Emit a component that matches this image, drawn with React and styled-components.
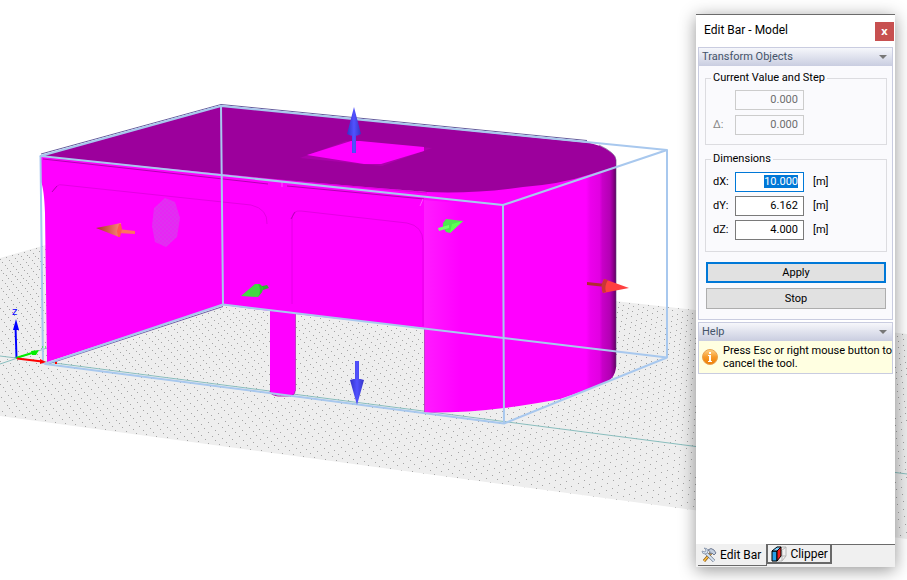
import React, { useEffect, useRef, useState } from 'react';
import styled, { createGlobalStyle, css } from 'styled-components';

const GlobalStyle = createGlobalStyle`
  * {
    box-sizing: border-box;
  }

  body {
    margin: 0;
    background: #fff;
    font-family: Roboto, 'Noto Sans', sans-serif;
    font-size: 11px;
    line-height: 14px;
    color: #000;
  }
`;

// Styled Components
const Workspace = styled.main`
  position: relative;
  display: flex;
  justify-content: flex-end;
  min-height: 100vh;
  overflow: hidden;
`;

/* The 3D view fills the window behind the tool panel */
const Viewport = styled.svg`
  position: absolute;
  inset: 0;
  width: 100%;
  height: 100%;
`;

const Panel = styled.aside`
  position: relative;
  display: flex;
  flex-direction: column;
  width: 199px;
  margin: 14px 12px 13px;
  background: #fff;
  border-top: 1px solid #6b6b6b;
  box-shadow: 0 3px 16px rgba(0, 0, 0, 0.42);
`;

const TitleBar = styled.header`
  display: flex;
  justify-content: space-between;
  height: 32px;
  padding: 7px 1px 0 8px;
`;

const Title = styled.h1`
  margin: 0;
  font-size: 12px;
  font-weight: normal;
  line-height: 16px;
`;

const CloseButton = styled.button`
  width: 19px;
  height: 19px;
  padding: 0 0 2px;
  border: none;
  background: #c75050;
  color: #fff;
  font: bold 11px/16px 'Noto Sans', sans-serif;
`;

const Sections = styled.div`
  flex: 1;
  display: flex;
  flex-direction: column;
  gap: 2px;
  padding: 0 2px;
`;

const Section = styled.section`
  border: 1px solid #c9cce0;
  background: #fafafd;
`;

const SectionHeader = styled.button`
  display: flex;
  align-items: center;
  justify-content: space-between;
  width: 100%;
  height: 18px;
  padding: 0 5px 0 3px;
  border: none;
  background: linear-gradient(#f6f7fb, #c9cde0);
  color: #44546a;
  font: inherit;

  &::after {
    content: '';
    border: 4px solid transparent;
    border-top-color: #777;
    border-bottom: none;
  }
`;

const TransformForm = styled.form`
  display: flex;
  flex-direction: column;
  padding: 5px 5px 10px 6px;
`;

const Group = styled.fieldset`
  display: flex;
  flex-direction: column;
  gap: ${(props) => props.$gap}px;
  min-width: 0;
  margin: 0 0 ${(props) => props.$after}px;
  padding: ${(props) => props.$top}px 7px ${(props) => props.$bottom}px;
  border: 1px solid #dcdce0;

  legend {
    margin-left: -2px;
    padding: 0 2px;
  }
`;

const Field = styled.div`
  display: grid;
  grid-template-columns: 22px 69px 1fr;
  align-items: center;
  height: 20px;

  label {
    color: ${(props) => (props.$disabled ? '#888' : '#000')};
  }

  input {
    grid-column: 2;
  }

  span {
    padding-left: 9px;
  }
`;

const NumberInput = styled.input`
  width: 100%;
  height: 20px;
  padding: 0 5px 1px;
  border: 1px solid #7a7a7a;
  background: #fff;
  font: inherit;
  text-align: right;

  &:focus {
    outline: none;
    border-color: #0078d7;
  }

  &:disabled {
    border-color: #ccc;
    background: #fafafd;
    color: #6d6d6d;
  }

  &::selection {
    background: #0078d7;
    color: #fff;
  }
`;

const Button = styled.button`
  height: 21px;
  margin: 0 1px;
  padding: 0;
  border: 1px solid #adadad;
  background: #e1e1e1;
  font: inherit;

  ${(props) =>
    props.$primary &&
    css`
      margin-bottom: 5px;
      border: 2px solid #0078d7;
    `}
`;

const HelpText = styled.div`
  display: flex;
  align-items: center;
  gap: 5px;
  height: 32px;
  padding: 0 0 0 3px;
  background: #ffffe1;
  line-height: 13px;
  white-space: nowrap;

  svg {
    flex: none;
  }

  p {
    margin: 0;
  }
`;

const Tabs = styled.nav`
  display: flex;
  height: 23px;
  background: linear-gradient(#6b6b6b, #6b6b6b) right top / 129px 1px no-repeat #f0f0f0;
`;

const Tab = styled.button`
  display: flex;
  align-items: center;
  gap: 3px;
  height: ${(props) => (props.$active ? 22 : 20)}px;
  padding: 0 ${(props) => (props.$active ? 5 : 2)}px 0 3px;
  border: solid #696969;
  border-width: ${(props) => (props.$active ? '0 1px 1px 0' : '1px 2px 2px 1px')};
  background: #f0f0f0;
  font-family: inherit;
  font-size: 12px;
  line-height: 16px;
  white-space: nowrap;

  &:first-child {
    margin-left: 2px;
  }
`;

const boxBase = [
  [45, 364],
  [504, 424],
  [667, 357],
  [223, 304],
];

const gridStep = 0.22;

// Maps model metres on the ground plane to screen points
const projectGround = (x, y) => {
  const [[x0, y0], [x1, y1], [x2, y2], [x3, y3]] = boxBase;
  const dx1 = x1 - x2;
  const dx2 = x3 - x2;
  const sx = x0 - x1 + x2 - x3;
  const dy1 = y1 - y2;
  const dy2 = y3 - y2;
  const sy = y0 - y1 + y2 - y3;
  const det = dx1 * dy2 - dx2 * dy1;
  const g = (sx * dy2 - dx2 * sy) / det;
  const h = (dx1 * sy - sx * dy1) / det;
  const u = x / 10;
  const v = y / 6.162;
  const w = g * u + h * v + 1;
  return [
    ((x1 - x0 + g * x1) * u + (x3 - x0 + h * x3) * v + x0) / w,
    ((y1 - y0 + g * y1) * u + (y3 - y0 + h * y3) * v + y0) / w,
  ];
};

const makeGridDots = () => {
  let d = '';
  for (let i = -70; i < 140; i++) {
    for (let j = -90; j < 90; j++) {
      const [px, py] = projectGround(i * gridStep, j * gridStep);
      if (px >= 0 && px < 907 && py > 230 && py < 545) {
        d += `M${Math.round(px)} ${Math.round(py)}h1v1h-1z`;
      }
    }
  }
  return d;
};

const gridDots = makeGridDots();

const Scene = () => (
  <Viewport viewBox="0 0 907 580" preserveAspectRatio="xMinYMid slice" role="img" aria-label="3D model view">
    <defs>
      <clipPath id="ground">
        <path d="M0 258L67 239L907 334V539L0 416z" />
      </clipPath>
      <linearGradient id="curve" gradientUnits="userSpaceOnUse" x1="586" y1="0" x2="616" y2="0">
        <stop offset="0" stopColor="#f0f" />
        <stop offset="0.15" stopColor="#ec00ec" />
        <stop offset="0.45" stopColor="#e200e2" />
        <stop offset="0.55" stopColor="#c800c8" />
        <stop offset="0.8" stopColor="#b400b4" />
        <stop offset="0.9" stopColor="#900090" />
        <stop offset="1" stopColor="#600060" />
      </linearGradient>
      <linearGradient id="pillar" x1="0" y1="0" x2="1" y2="0">
        <stop offset="0" stopColor="#ff1cff" />
        <stop offset="1" stopColor="#f0f" />
      </linearGradient>
      <linearGradient id="blue" x1="0" y1="0" x2="1" y2="0">
        <stop offset="0" stopColor="#3232c8" />
        <stop offset="0.5" stopColor="#5252ff" />
        <stop offset="1" stopColor="#3434c4" />
      </linearGradient>
      <linearGradient id="red" x1="0" y1="0" x2="1" y2="0">
        <stop offset="0" stopColor="#a83028" />
        <stop offset="1" stopColor="#ff8878" />
      </linearGradient>
      <pattern id="mesh" width="4" height="4" patternUnits="userSpaceOnUse">
        <path d="M0 0h4v4H0z" fill="#e030f0" />
        <path d="M0 1h2M2 3h2" stroke="#ee1cf8" />
      </pattern>
    </defs>

    {/* ground plane */}
    <g clipPath="url(#ground)">
      <path d="M0 230H907V545H0z" fill="#eee" />
      <path d={gridDots} fill="#a4a4a4" shapeRendering="crispEdges" />
    </g>
    <path d="M0 356L16 358L907 474M0 364L47 348" stroke="#8abebe" fill="none" />

    {/* walls */}
    <path
      d="M41 156L428 192L616 160V367Q615 377 607 382Q596 387 583 391L560 399Q535 404 504 408Q465 413 424 412.500V328L295 314V391Q295 395 290 396L276 395Q270 394 270 391V311L223 305L47 362L45 213Q44 188 41 182z"
      fill="#f0f"
    />
    <path d="M424 200L460 203V411L424 412z" fill="url(#pillar)" />
    <path d="M586 172L616 160V367Q615 377 607 382L586 390z" fill="url(#curve)" />
    <path d="M48 364L223 306.500" stroke="#7060a8" fill="none" />
    <path d="M424.500 329V412M295.500 314V391" stroke="#c040c8" fill="none" />
    <path d="M270 391Q270 395 278 396H288Q295 396 295 391" stroke="#b020b8" fill="none" />
    <path
      d="M52 192L57 186Q59 184 63 185L251 205Q268 209 267 224M292 304V219Q292 210 301 211L407 223Q423 226 423 242V326"
      stroke="#e400e4"
      fill="none"
    />
    <path d="M52 192L57 186M291 219L295 212" stroke="#b800b8" fill="none" />
    <path d="M43 159L268 184M287 186L424 199" stroke="#b400b4" fill="none" />
    <path d="M282 182v5M420 206l3 -7" stroke="#ff50ff" fill="none" />
    <path d="M165 198L175 202L180 218L177 237L166 247L155 242L152 226L154 208z" fill="url(#mesh)" />

    {/* roof */}
    <path
      d="M41 156L221 106L590 143Q599 145 606 149Q616 155 616 160V166L588 175Q561 184 523 187Q474 194 427 192L280 180z"
      fill="#9c009c"
    />
    <path d="M50 158L280 180L427 193" stroke="#e000e0" fill="none" />
    <path d="M300 158L346 141L432 148L382 166z" fill="#ac00ac" />
    <path d="M307 155L351 141H360L424 147V151L381 164L364 164z" fill="#f0f" />
    <path d="M41 154L221 104.500L587 140.500" stroke="#665c9c" fill="none" />
    <path d="M599 145Q616 153 616 160V367" stroke="#5f427c" strokeOpacity="0.6" fill="none" />

    {/* bounding box */}
    <g fill="none" stroke="#a8c8ee" strokeWidth="2" strokeLinejoin="round">
      <path d="M40.500 156L221 106L667 150L503 205z" />
      <path d="M45 364L223 304.500L667 357.500L504 423.500z" />
      <path d="M40.500 156L43 364M221 106L223 304.500M667 150V357.500M503 205L504 423.500" />
    </g>

    {/* move handles */}
    <path d="M352 134h4v19h-4zM354 107L361 134Q354 138 347 134z" fill="url(#blue)" />
    <path d="M355 361h4v19h-4zM357 405L350 380Q357 377 364 380z" fill="url(#blue)" />
    <path d="M118 229L135 231V234L118 233z" fill="#ff7060" />
    <path d="M96 228L121 223L119 237z" fill="url(#red)" />
    <path d="M119 224L121 224L122 229L120 237L118 237L117 231z" fill="#ff5a50" />
    <path d="M587 282L606 284V287L587 285z" fill="#b02c30" />
    <path d="M629 288L604 279Q600 286 603 293z" fill="#ff4040" />
    <path d="M604 279Q600 286 603 293L606 292Q604 286 608 280z" fill="#c83636" />
    <path d="M463 221L446 219L443 223V227L446 232L450 233z" fill="#50e650" />
    <path d="M463 221L450 233L452 224z" fill="#5cff50" />
    <path d="M438 228L449 225V228L439 231z" fill="#70ff68" />
    <path d="M258 287L267 285L269 288L260 291z" fill="#30b030" />
    <path d="M241 296L255 284H260L263 288L262 292L258 297z" fill="#43d843" />
    <path d="M258 284L261 285L263 288L262 292L258 297Q262 290 258 284z" fill="#34be34" />

    {/* origin axes */}
    <path d="M16.500 358L15.500 326" stroke="#00f" strokeWidth="2" />
    <path d="M16 319L19 330H13z" fill="#00f" />
    <path d="M16 358L32 353" stroke="#0e0" strokeWidth="2" />
    <path d="M31 351L39 350L36 355H32z" fill="#0e0" />
    <path d="M42 347h1M45 347h1" stroke="#0e0" />
    <path d="M17 358.500L42 361.500" stroke="#f00" strokeWidth="2" />
    <path d="M40 359L46 362L40 364zM55 362h2v2h-2z" fill="#f00" />
    <text x="12" y="315" fill="#00f" fontSize="10" fontFamily="DejaVu Sans, sans-serif">z</text>
  </Viewport>
);

const InfoIcon = () => (
  <svg width="16" height="16" viewBox="0 0 16 16" aria-hidden="true">
    <defs>
      <linearGradient id="info" x1="0" y1="0" x2="0" y2="1">
        <stop offset="0" stopColor="#ffd48a" />
        <stop offset="0.5" stopColor="#f79a28" />
        <stop offset="1" stopColor="#ee7d05" />
      </linearGradient>
    </defs>
    <circle cx="8" cy="8" r="7.500" fill="url(#info)" stroke="#e9a350" />
    <path d="M7 3h2v2H7zM6 6h3v6H7V7H6zM6 12h4v1H6z" fill="#fff" />
  </svg>
);

const ToolsIcon = () => (
  <svg width="16" height="16" viewBox="0 0 16 16" aria-hidden="true">
    <path d="M3 14L10 6" stroke="#8a5a18" strokeWidth="3" />
    <path d="M3 14L10 6" stroke="#ffc040" strokeWidth="1.500" />
    <path d="M4 5L13 14" stroke="#4c5870" strokeWidth="3" />
    <path d="M4 5L13 14" stroke="#d8e6f4" strokeWidth="2" />
    <path d="M3 1L5 3L4 5L1 4Q1 7 4 7Q7 7 7 4Q7 1 3 1z" fill="#d4e0ee" stroke="#8793a8" strokeWidth="0.800" />
    <path d="M7 3Q10 0 13 3L15 6L13 8L11 6L9 7Q10 4 7 3z" fill="#c4d0e0" stroke="#65718a" strokeWidth="0.900" />
  </svg>
);

const ClipperIcon = () => (
  <svg width="16" height="16" viewBox="0 0 16 16" aria-hidden="true">
    <path d="M6 1h9v9l-4 5H1M10 5h-4M10 5l5-4M11 5v10M6 10h9" fill="none" stroke="#b4b4b4" />
    <path d="M1 5h5v10H1z" fill="#28a0e8" stroke="#000" />
    <path d="M1 5L6 1H10L6 5z" fill="#80d0ff" stroke="#000" />
    <path d="M6 5L10 1V10L6 15z" fill="#f02020" stroke="#000" />
  </svg>
);

// Main Component
const App = () => {
  const [dimensions, setDimensions] = useState({ dX: '10.000', dY: '6.162', dZ: '4.000' });
  const firstInput = useRef(null);

  useEffect(() => {
    firstInput.current.focus();
    firstInput.current.select();
  }, []);

  const handleChange = (e) => {
    const { name, value } = e.target;
    setDimensions({ ...dimensions, [name]: value });
  };

  return (
    <Workspace>
      <GlobalStyle />
      <Scene />
      <Panel>
        <TitleBar>
          <Title>Edit Bar - Model</Title>
          <CloseButton type="button" aria-label="Close">x</CloseButton>
        </TitleBar>
        <Sections>
          <Section>
            <SectionHeader type="button">Transform Objects</SectionHeader>
            <TransformForm onSubmit={(e) => e.preventDefault()}>
              <Group $gap={5} $top={5} $bottom={9} $after={7}>
                <legend>Current Value and Step</legend>
                <Field $disabled>
                  <NumberInput aria-label="Current value" defaultValue="0.000" disabled />
                </Field>
                <Field $disabled>
                  <label htmlFor="step">Δ:</label>
                  <NumberInput id="step" defaultValue="0.000" disabled />
                </Field>
              </Group>
              <Group $gap={4} $top={6} $bottom={11} $after={10}>
                <legend>Dimensions</legend>
                {Object.keys(dimensions).map((name, index) => (
                  <Field key={name}>
                    <label htmlFor={name}>{name}:</label>
                    <NumberInput
                      id={name}
                      name={name}
                      ref={index === 0 ? firstInput : null}
                      value={dimensions[name]}
                      onChange={handleChange}
                    />
                    <span>[m]</span>
                  </Field>
                ))}
              </Group>
              <Button type="submit" $primary>Apply</Button>
              <Button type="button">Stop</Button>
            </TransformForm>
          </Section>
          <Section>
            <SectionHeader type="button">Help</SectionHeader>
            <HelpText>
              <InfoIcon />
              <p>
                Press Esc or right mouse button to
                <br />
                cancel the tool.
              </p>
            </HelpText>
          </Section>
        </Sections>
        <Tabs>
          <Tab type="button" $active>
            <ToolsIcon />
            Edit Bar
          </Tab>
          <Tab type="button">
            <ClipperIcon />
            Clipper
          </Tab>
        </Tabs>
      </Panel>
    </Workspace>
  );
};

export default App;
